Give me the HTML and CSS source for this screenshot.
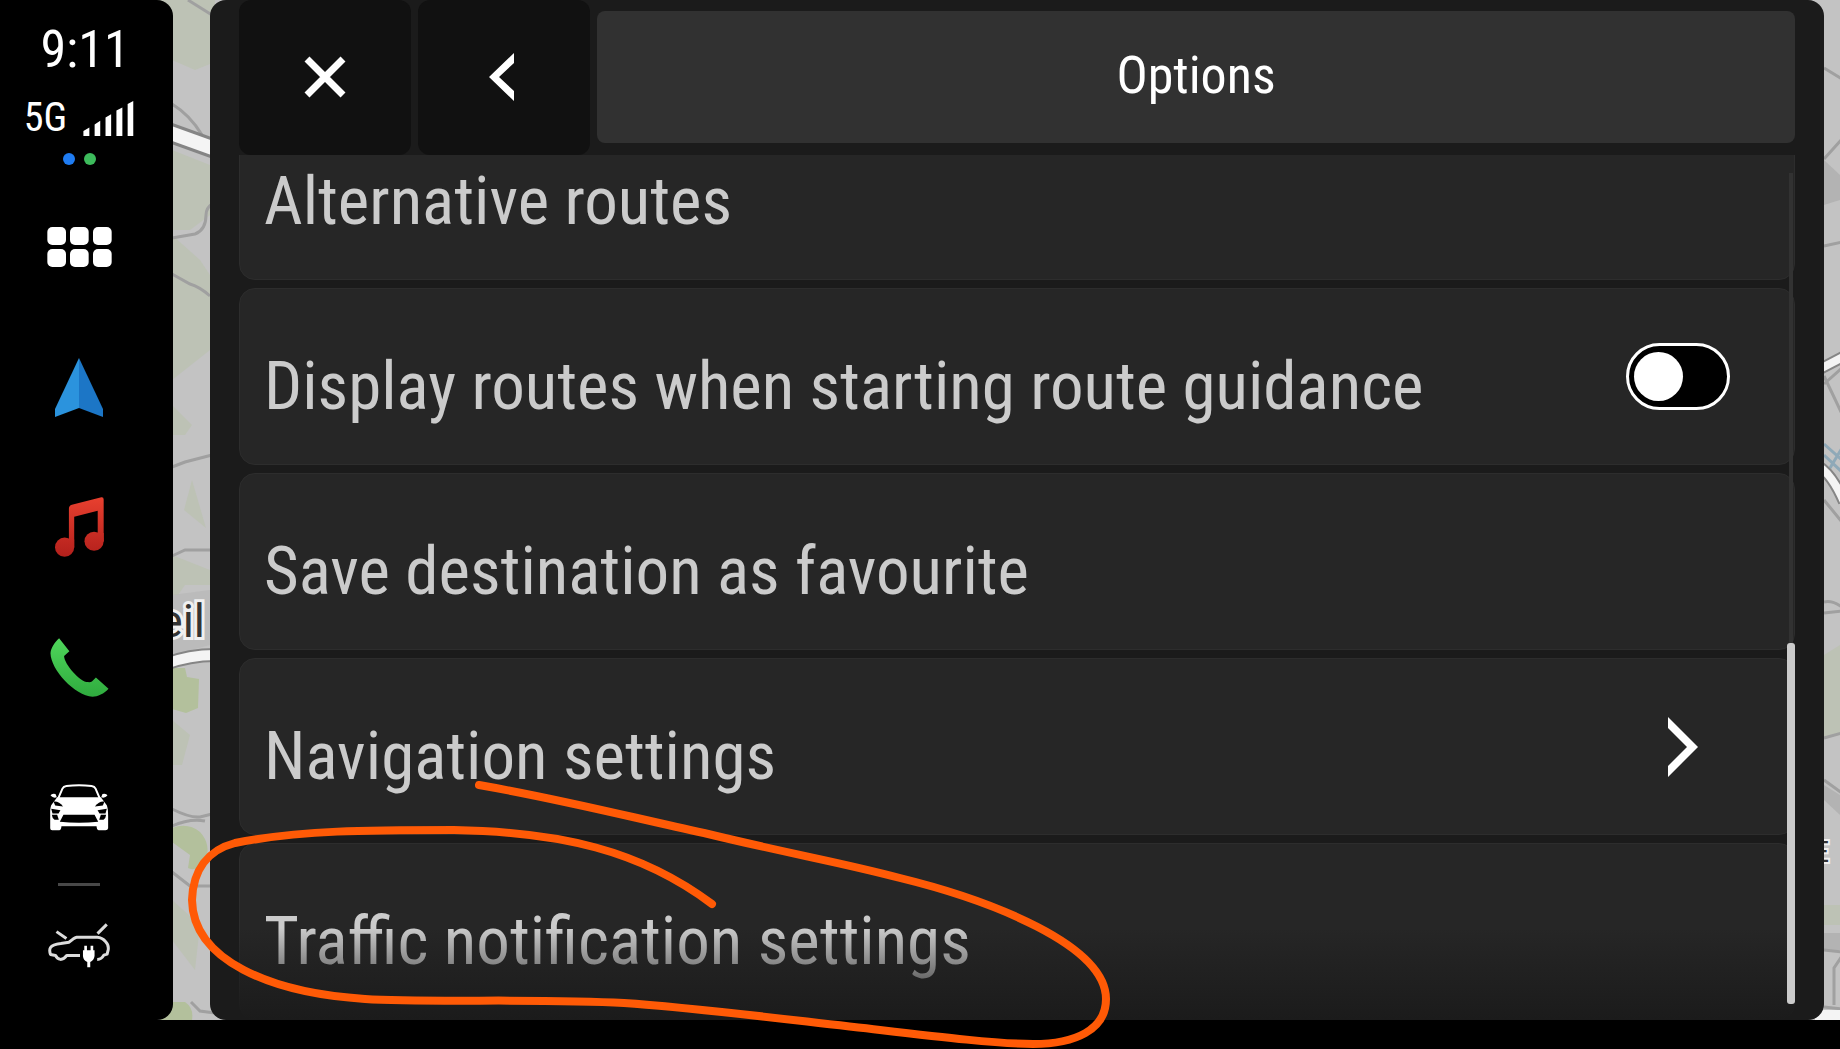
FILE: index.html
```
<!DOCTYPE html>
<html lang="en">
<head>
 <meta charset="UTF-8">
 <meta name="viewport" content="width=device-width, initial-scale=1">
 <title>Options</title>
 <link rel="stylesheet" href="styles.css">
</head>
<body>
<div class="screen">
 <!-- map behind everything -->
 <svg class="map" viewBox="0 0 1840 1020" preserveAspectRatio="xMidYMid slice" aria-hidden="true">
  <rect width="1840" height="1020" fill="#c3c3c3"/>
  <g fill="#bdc2b5">
   <path d="M150 0H215V62L195 70L172 60Z"/>
   <path d="M172 150L210 165V215L190 230H172Z"/>
   <path d="M172 235L200 260L210 275V350L172 380Z"/>
   <path d="M172 405L192 425L185 435H172Z"/>
   <path d="M192 480L206 528L184 510Z"/>
   <path d="M172 555L210 570V585H185L178 595H172Z"/>
   <path d="M172 720L190 735L182 765H172Z"/>
   <path d="M172 900L200 925L195 970L172 940Z"/>
   <path d="M1824 655L1840 645V735L1824 738Z"/>
   <path d="M1824 905H1840V925H1824Z"/>
  </g>
  <g fill="#b3b3b3">
   <path d="M1824 160L1840 175V200L1824 205Z"/>
   <path d="M1824 785L1840 795V815L1824 800Z"/>
   <path d="M1824 933H1840V950H1824Z"/>
   <path d="M172 595L210 590V645L172 655Z" opacity=".5"/>
  </g>
  <g fill="#b3c09c">
   <path d="M172 668H185L187 677L199 679L198 708L186 713L172 709Z"/>
   <path d="M172 828Q188 822 200 832Q212 845 205 862Q195 872 188 868L190 855L172 842Z"/>
   <path d="M160 1002H185Q194 1008 192 1020H160Z"/>
  </g>
  <g fill="none" stroke="#a0a0a0" stroke-width="3">
   <path d="M188 0L212 15"/>
   <path d="M172 104Q190 115 202 135"/>
   <path d="M172 238L195 234Q206 230 206 215Q206 208 212 204"/>
   <path d="M172 274L190 284Q200 287 210 296"/>
   <path d="M172 467L185 462L212 455"/>
   <path d="M172 556L185 550H212"/>
   <path d="M172 809Q190 818 200 817L212 814M172 826Q190 818 205 821"/>
   <path d="M172 872L190 886H212"/>
   <path d="M191 1002L200 1011L215 1013"/>
   <path d="M1824 68L1842 79M1824 159L1842 139M1824 246L1842 242"/>
   <path d="M1824 376L1842 414M1824 384L1842 368M1824 500L1842 522"/>
   <path d="M1824 602Q1832 600 1842 607M1824 613L1842 611"/>
   <path d="M1824 738L1842 733M1824 780L1842 793"/>
   <path d="M1824 950L1842 952M1842 956L1834 968V1005M1824 1007L1842 1009"/>
  </g>
  <g fill="none" stroke="#8fa9b8" stroke-width="3">
   <path d="M1824 444L1842 460M1824 455L1842 472M1830 468L1842 448"/>
  </g>
  <g fill="none" stroke="#858585">
   <path d="M165 131L215 149" stroke-width="20"/>
   <path d="M165 664Q190 655 215 655" stroke-width="14"/>
   <path d="M1818 370L1845 356" stroke-width="12"/>
   <path d="M1818 466Q1832 474 1844 502" stroke-width="12"/>
  </g>
  <g fill="none" stroke="#f4f4f4">
   <path d="M165 131L215 149" stroke-width="14"/>
   <path d="M165 664Q190 655 215 655" stroke-width="10"/>
   <path d="M1818 370L1845 356" stroke-width="8"/>
   <path d="M1818 466Q1832 474 1844 502" stroke-width="8"/>
   <path d="M1815 1015H1845" stroke-width="10"/>
  </g>
  <text class="place" x="205" y="637">eil</text>
  <text class="place small" x="1829" y="862">E</text>
 </svg>

 <aside class="sidebar">
  <p class="time">9:11</p>
  <div class="signal">
   <span>5G</span>
   <svg width="51" height="35" viewBox="252 299 152 106" fill="#fff" aria-hidden="true">
    <path d="M252 390L270 379V405H252ZM286 370L303 359V405H286ZM319 349L336 339V405H319ZM352 328L370 319V405H352ZM386 308L403 299V405H386Z"/>
   </svg>
  </div>
  <div class="dots"><span class="dot blue"></span><span class="dot green"></span></div>

  <nav class="apps">
   <button aria-label="All apps">
    <svg width="65" height="40" viewBox="141 678 195 120" fill="#fff">
     <rect x="142" y="678" width="56" height="54" rx="15"/><rect x="210" y="678" width="56" height="54" rx="15"/><rect x="279" y="678" width="56" height="54" rx="15"/>
     <rect x="142" y="744" width="56" height="54" rx="15"/><rect x="210" y="744" width="56" height="54" rx="15"/><rect x="279" y="744" width="56" height="54" rx="15"/>
    </svg>
   </button>
   <button aria-label="Navigation">
    <svg width="48" height="59" viewBox="165 82 144 177">
     <path d="M237 82L165 235V259L237 232Z" fill="#2b93dd"/>
     <path d="M237 82L309 235V259L237 232Z" fill="#1c76c6"/>
    </svg>
   </button>
   <button aria-label="Music">
    <svg width="49" height="60" viewBox="163 502 148 180">
     <defs><linearGradient id="red" x1="0" y1="502" x2="0" y2="682" gradientUnits="userSpaceOnUse"><stop offset="0" stop-color="#e8402f"/><stop offset="1" stop-color="#b3201c"/></linearGradient></defs>
     <g fill="url(#red)">
      <path d="M205 640V537Q205 528 214 525L303 502Q310 501 310 509V635H292V543L221 561V653Z"/>
      <circle cx="192" cy="653" r="29"/>
      <circle cx="281" cy="635" r="29"/>
      <path d="M205 630H221V653H205ZM292 610H310V635H292Z"/>
     </g>
    </svg>
   </button>
   <button aria-label="Phone">
    <svg width="59" height="59" viewBox="148 924 177 178">
     <defs><linearGradient id="grn" x1="0" y1="924" x2="0" y2="1102" gradientUnits="userSpaceOnUse"><stop offset="0" stop-color="#4fd65b"/><stop offset="1" stop-color="#2fab3e"/></linearGradient></defs>
     <path fill="url(#grn)" d="M175 925L206 964L190 978C190 1002 238 1057 262 1057Q270 1058 274 1055L286 1043L324 1077C312 1092 290 1101 276 1101C222 1098 150 1020 149 970C150 955 162 936 175 925Z"/>
    </svg>
   </button>
   <button aria-label="Car">
    <svg width="60" height="47" viewBox="148 194 180 142">
     <path d="M175 238L188 208Q191 201 200 200Q238 195 276 200Q285 201 288 208L301 238" fill="none" stroke="#fff" stroke-width="6"/>
     <path fill="#fff" d="M172 234H304L322 258Q326 268 326 290V328Q325 334 318 334H298Q292 334 291 322H185Q184 334 178 334H157Q151 334 151 328V290Q150 268 154 258Z"/>
     <g id="side">
      <path fill="#fff" d="M152 229Q155 221 167 224L171 234Q160 238 152 229Z"/>
      <path d="M161 247Q176 244 190 262L166 259Z"/>
      <path d="M154 269L182 273L176 283H158Z"/>
      <path d="M156 287H172L177 302H164Q157 298 156 287Z"/>
     </g>
     <use href="#side" transform="translate(476 0) scale(-1 1)"/>
     <path d="M191 287H285L296 308Q238 314 180 308Z"/>
    </svg>
   </button>
  </nav>
  <hr>
  <button class="charge" aria-label="Charging">
   <svg width="62" height="45" viewBox="142 608 186 136">
    <g fill="none" stroke="#dcdcdc" stroke-width="9" stroke-linejoin="round">
     <path d="M167 634L197 655M319 612L291 640"/>
     <path d="M238 706H198Q190 718 179 718Q168 716 164 706L149 703Q144 690 149 682Q155 673 180 670L205 666Q221 652 228 651H290Q305 652 315 664Q326 675 323 690L320 702L310 705Q303 718 290 718"/>
    </g>
    <path fill="#fff" d="M251 677H259V690H270V677H278V690H282V708Q280 722 269 726V742H260V726Q248 722 247 708V690H251Z"/>
   </svg>
  </button>
 </aside>

 <main class="panel">
  <header class="topbar">
   <button class="square" aria-label="Close">
    <svg width="42" height="42" viewBox="0 0 42 42"><path d="M3 3L39 39M39 3L3 39" stroke="#fff" stroke-width="7"/></svg>
   </button>
   <button class="square" aria-label="Back">
    <svg width="30" height="48" viewBox="0 0 30 48"><path d="M0 24L25 0V10L10 24L25 38V48Z" fill="#fff"/></svg>
   </button>
   <h1>Options</h1>
  </header>

  <div class="list">
   <button class="row"><span class="label">Alternative routes</span></button>
   <label class="row" for="display-routes">
    <span class="label">Display routes when starting route guidance</span>
    <input class="toggle" type="checkbox" id="display-routes">
   </label>
   <button class="row"><span class="label">Save destination as favourite</span></button>
   <button class="row">
    <span class="label">Navigation settings</span>
    <svg class="chevron" width="30" height="60" viewBox="0 0 30 60" aria-hidden="true"><path d="M0 0L30 30L0 60V49L19 30L0 11Z" fill="#fff"/></svg>
   </button>
   <button class="row"><span class="label">Traffic notification settings</span></button>
   <div class="scrollbar"><div class="thumb"></div></div>
  </div>
 </main>
</div>

<!-- hand-drawn circle round the last row -->
<svg class="marker" viewBox="0 0 1840 1049" aria-hidden="true">
 <path d="M479 785C560 799 630 817 704 833C790 854 840 862 900 878C990 900 1106 945 1106 999C1106 1030 1075 1044 1033 1044C1000 1044 940 1037 880 1030C790 1020 700 1008 624 1003C540 998 430 1003 365 999C270 993 193 960 192 900C193 870 208 850 235 843C300 830 370 830 454 830C560 832 640 850 712 904"/>
</svg>
</body>
</html>
```
FILE: styles.css
```
* {
 box-sizing: border-box;
}
body {
 margin: 0;
 height: 100vh;
 padding-bottom: 29px;
 overflow: hidden;
 position: relative;
 background: #000;
 color: #fff;
 font-family: "Roboto Condensed", Roboto, "Liberation Sans", sans-serif;
}
button {
 border: 0;
 padding: 0;
 background: none;
 color: inherit;
 font: inherit;
 cursor: pointer;
}
svg {
 display: block;
}
.screen {
 position: relative;
 height: 100%;
 display: flex;
 gap: 37px;
 padding-right: 16px;
}
.map {
 position: absolute;
 top: 0;
 left: 0;
 width: 100%;
 height: 100%;
}
.place {
 font-family: Roboto, sans-serif;
 font-size: 46px;
 text-anchor: end;
 fill: #333;
 stroke: #f0f0f0;
 stroke-width: 6px;
 paint-order: stroke;
}
.place.small {
 font-size: 30px;
 stroke-width: 4px;
}

/* left bar */
.sidebar {
 position: relative;
 width: 173px;
 flex-shrink: 0;
 padding: 18px 15px 0 0;
 background: #000;
 border-radius: 0 16px 16px 0;
 display: flex;
 flex-direction: column;
 align-items: center;
}
.time {
 margin: 0;
 padding-left: 12px;
 font-size: 52px;
 line-height: 64px;
}
.signal {
 display: flex;
 align-items: center;
 gap: 16px;
 margin-top: 18px;
 font-size: 40px;
 line-height: 36px;
}
.dots {
 display: flex;
 gap: 9px;
 margin-top: 17px;
}
.dot {
 width: 12px;
 height: 12px;
 border-radius: 50%;
}
.blue {
 background: #1f7cf2;
}
.green {
 background: #3dbb5c;
}
.apps {
 display: flex;
 flex-direction: column;
 margin-top: 12px;
}
.apps button {
 display: flex;
 align-items: center;
 justify-content: center;
 width: 120px;
 height: 140px;
}
hr {
 width: 42px;
 height: 3px;
 margin: 6px 0 0;
 border: 0;
 background: #484848;
}
.charge {
 height: 118px;
}

/* options panel */
.panel {
 position: relative;
 flex: 1;
 min-width: 0;
 padding: 0 29px;
 background: #1b1b1b;
 border-radius: 16px;
 overflow: hidden;
 display: flex;
 flex-direction: column;
}
.topbar {
 display: flex;
 gap: 7px;
 height: 155px;
 flex-shrink: 0;
}
.square {
 width: 172px;
 padding-bottom: 2px;
 display: flex;
 align-items: center;
 justify-content: center;
 background: #111;
 border-radius: 12px;
}
h1 {
 flex: 1;
 margin: 11px 0 12px;
 background: #313131;
 border-radius: 8px;
 font-size: 52px;
 font-weight: 400;
 line-height: 130px;
 text-align: center;
}
.list {
 position: relative;
 flex: 1;
 min-height: 0;
 overflow: hidden;
 display: flex;
 flex-direction: column;
 justify-content: flex-end; /* scrolled to the end */
 gap: 8px;
}
.list::after {
 content: "";
 position: absolute;
 left: 0;
 right: 0;
 bottom: 0;
 height: 92px;
 background: linear-gradient(rgba(27, 27, 27, 0), #1b1b1b);
}
.row {
 flex-shrink: 0;
 display: flex;
 align-items: center;
 justify-content: space-between;
 width: 100%;
 height: 177px;
 padding-left: 24px;
 background: #262626;
 border: 1px solid #2d2d2d;
 border-radius: 16px;
 color: #cbcbcb;
 text-align: left;
 cursor: pointer;
}
.label {
 padding-top: 18px;
 font-size: 67px;
 line-height: 72px;
 white-space: nowrap;
}
.toggle {
 appearance: none;
 flex-shrink: 0;
 width: 104px;
 height: 67px;
 margin: 0 64px 0 0;
 padding: 6px 5px;
 background: #000;
 border: 3px solid #fff;
 border-radius: 34px;
 cursor: pointer;
}
.toggle::before {
 content: "";
 display: block;
 width: 49px;
 height: 49px;
 border-radius: 50%;
 background: #fff;
}
.toggle:checked::before {
 margin-left: auto;
}
.chevron {
 margin-right: 96px;
}
.scrollbar {
 position: absolute;
 z-index: 1;
 top: 18px;
 right: 0;
 bottom: 16px;
 width: 8px;
 display: flex;
 flex-direction: column;
 justify-content: flex-end;
 background: linear-gradient(90deg, transparent 2px, #323232 2px 6px, transparent 6px);
}
.thumb {
 height: 43.5%;
 border-radius: 3px;
 background: #cbcbcb;
}

.marker {
 position: absolute;
 top: 0;
 left: 0;
 width: 100%;
 height: 100%;
 pointer-events: none;
}
.marker path {
 fill: none;
 stroke: #ff5a06;
 stroke-width: 8;
 stroke-linecap: round;
}
```
